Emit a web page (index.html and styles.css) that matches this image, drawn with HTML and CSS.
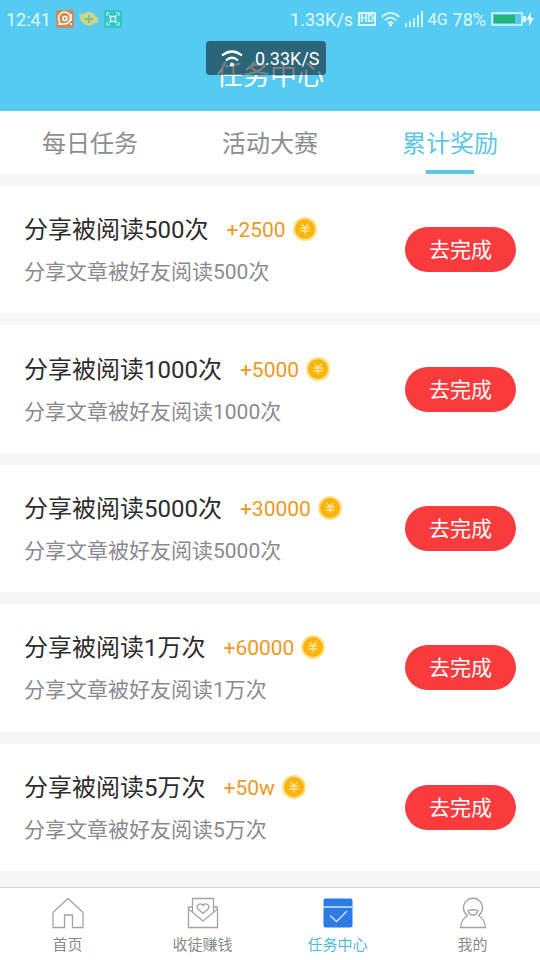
FILE: index.html
```html
<!DOCTYPE html>
<html lang="zh-CN">
<head>
<meta charset="utf-8">
<meta name="viewport" content="width=device-width, initial-scale=1">
<title>任务中心</title>
<link rel="stylesheet" href="styles.css">
</head>
<body>
<svg class="defs" aria-hidden="true">
  <symbol id="coin" viewBox="0 0 24 24">
    <circle cx="12" cy="12" r="12" fill="#fde08a"/>
    <circle cx="12" cy="12" r="10" fill="#fbb40c"/>
    <path d="M8.5 7 12 10.500l3.500-3.500M7.500 11h9M7.500 14h9M12 10.500v7" fill="none" stroke="#fde69a" stroke-width="1.300"/>
  </symbol>
  <symbol id="wifi" viewBox="0 0 22 18">
    <path d="M1 6.500Q11-2.500 21 6.500M4.500 10.500Q11 4.500 17.500 10.500M8 14Q11 11.500 14 14" fill="none" stroke="currentColor" stroke-width="2"/>
    <circle cx="11" cy="16" r="1.700" fill="currentColor"/>
  </symbol>
  <symbol id="wifi-low" viewBox="0 0 22 18">
    <path d="M1 6.500Q11-1.500 21 6.500M5 11.500Q11 6 17 11.500" fill="none" stroke="currentColor" stroke-width="2.200"/>
    <circle cx="11" cy="15.500" r="2" fill="currentColor"/>
  </symbol>
</svg>
<header class="header">
  <div class="status">
    <div class="status-left">
      <time>12:41</time>
      <svg width="18" height="18" viewBox="0 0 18 18"><rect width="18" height="18" rx="2" fill="#cc8d59"/><path d="M4 12a6 6 0 1 1 4 2H3l1-2M15 4v7M15 13v2" fill="none" stroke="#fff" stroke-width="1.500"/><circle cx="9" cy="8.500" r="2" fill="none" stroke="#fff" stroke-width="1.500"/></svg>
      <svg width="20" height="18" viewBox="0 0 20 18"><path d="M0 4 4 4Q10-1 16 5L19 8 19 13 16 13Q10 19 4 13L1 10Z" fill="#c8d58b"/><path d="M6 9h8M10 5v8" stroke="#75b486" stroke-width="1.500"/></svg>
      <svg width="18" height="18" viewBox="0 0 18 18"><rect width="18" height="18" rx="2" fill="#30c8c7"/><path d="M3 6V3h3M12 3h3v3M15 12v3h-3M6 15H3v-3M5 5l2 2M13 5l-2 2M5 13l2-2M13 13l-2-2" fill="none" stroke="#b6f3ee" stroke-width="1.200"/><rect x="6.500" y="6.500" width="5" height="5" fill="none" stroke="#e2fffb" stroke-width="1.300"/></svg>
    </div>
    <div class="status-right">
      <span>1.33K/s</span>
      <span class="hd">HD</span>
      <svg width="19" height="16"><use href="#wifi"/></svg>
      <svg width="18" height="16" viewBox="0 0 18 16"><path d="M1 12v4M5 10v6M9 7v9M13 4v12M17 0v16" stroke="currentColor" stroke-width="1.700"/></svg>
      <span class="network">4G</span>
      <span>78%</span>
      <svg class="battery" width="43" height="16" viewBox="0 0 43 16"><rect x="1" y="2" width="30" height="12" fill="none" stroke="currentColor" stroke-width="1.500"/><rect x="3" y="4" width="21" height="8" fill="#22b573"/><path d="M32 5h3v6h-3z" fill="currentColor"/><path d="M40 1 35 9h3v6l5-8h-3z" fill="currentColor"/></svg>
    </div>
  </div>
  <h1 class="title">任务中心</h1>
  <div class="speed"><svg width="22" height="18"><use href="#wifi-low"/></svg><span>0.33K/S</span></div>
</header>
<nav class="tabs">
  <a class="tab" href="#daily">每日任务</a>
  <a class="tab" href="#contest">活动大赛</a>
  <a class="tab active" href="#rewards" aria-current="page">累计奖励</a>
</nav>
<main class="list">
  <section class="task">
    <div class="info">
      <h2 class="name">分享被阅读500次 <span class="reward">+2500<svg class="coin"><use href="#coin"/></svg></span></h2>
      <p class="desc">分享文章被好友阅读500次</p>
    </div>
    <button class="go" type="button">去完成</button>
  </section>
  <section class="task">
    <div class="info">
      <h2 class="name">分享被阅读1000次 <span class="reward">+5000<svg class="coin"><use href="#coin"/></svg></span></h2>
      <p class="desc">分享文章被好友阅读1000次</p>
    </div>
    <button class="go" type="button">去完成</button>
  </section>
  <section class="task">
    <div class="info">
      <h2 class="name">分享被阅读5000次 <span class="reward">+30000<svg class="coin"><use href="#coin"/></svg></span></h2>
      <p class="desc">分享文章被好友阅读5000次</p>
    </div>
    <button class="go" type="button">去完成</button>
  </section>
  <section class="task">
    <div class="info">
      <h2 class="name">分享被阅读1万次 <span class="reward">+60000<svg class="coin"><use href="#coin"/></svg></span></h2>
      <p class="desc">分享文章被好友阅读1万次</p>
    </div>
    <button class="go" type="button">去完成</button>
  </section>
  <section class="task">
    <div class="info">
      <h2 class="name">分享被阅读5万次 <span class="reward">+50w<svg class="coin"><use href="#coin"/></svg></span></h2>
      <p class="desc">分享文章被好友阅读5万次</p>
    </div>
    <button class="go" type="button">去完成</button>
  </section>
</main>
<nav class="bottom">
  <a class="item" href="#home">
    <svg class="icon" viewBox="0 0 32 32"><path d="M1 15.500 16 1.500l15 14V30.500H20.500V18h-8v12.500H1Z"/></svg>
    <span>首页</span>
  </a>
  <a class="item" href="#invite">
    <svg class="icon" viewBox="0 0 32 32"><path d="M5.500 15V1.500h21V15M5.500 10H1.500v20.500h29V10h-4M1.500 12 16 24 30.500 12"/><path d="M16 16.500 11 12C8.500 8.500 13 4.500 16 8.500 19 4.500 23.500 8.500 21 12Z"/></svg>
    <span>收徒赚钱</span>
  </a>
  <a class="item active" href="#tasks" aria-current="page">
    <svg class="icon" viewBox="0 0 32 32"><rect class="solid" x="1.500" y="1.500" width="29" height="29" rx="2"/><path class="mark" d="M1.500 10h29M8 18.500l6.500 6L25 14"/></svg>
    <span>任务中心</span>
  </a>
  <a class="item" href="#me">
    <svg class="icon" viewBox="0 0 32 32"><path d="M10.500 18.500a9.500 9.500 0 1 1 11 0Q27.500 22 28.500 30.500h-25Q4.500 22 10.500 18.500Z"/><path d="M11 13.500q5-1.500 10 0-1 4.500-5 4.500t-5-4.500Z"/></svg>
    <span>我的</span>
  </a>
</nav>
</body>
</html>
```
FILE: styles.css
```css
* {
  box-sizing: border-box;
}

body {
  margin: 0;
  min-height: 100vh;
  display: flex;
  flex-direction: column;
  background: #f6f6f6;
  font-family: Roboto, "Noto Sans CJK SC", sans-serif;
}

a {
  color: inherit;
  text-decoration: none;
}

h1, h2, p {
  margin: 0;
  font-weight: 400;
}

svg {
  flex: none;
}

.defs {
  position: absolute;
  width: 0;
  height: 0;
}

.header {
  position: relative;
  height: 111px;
  background: #55cbf3;
  color: #fff;
}

.status {
  display: flex;
  justify-content: space-between;
  align-items: center;
  height: 38px;
  padding: 0 6px;
  font-size: 18px;
  color: #e0f8ff;
}

.status-left {
  display: flex;
  align-items: center;
  gap: 5px;
}

.status-right {
  display: flex;
  align-items: center;
  gap: 5px;
}

.hd {
  border: 2px solid;
  font-size: 10px;
  font-weight: 700;
  line-height: 10px;
}

.network {
  font-size: 16px;
}

.title {
  line-height: 76px;
  font-size: 27px;
  text-align: center;
}

.speed {
  position: absolute;
  top: 41px;
  left: 50%;
  transform: translateX(-64px);
  display: flex;
  align-items: center;
  gap: 12px;
  height: 34px;
  padding: 0 6px 0 15px;
  border-radius: 4px;
  background: rgba(0, 0, 0, 0.5);
  font-size: 18px;
}

.tabs {
  display: grid;
  grid-template-columns: repeat(3, 1fr);
  height: 63px;
  background: #fff;
  color: #8e8e8e;
  font-size: 24px;
  line-height: 66px;
  text-align: center;
}

.tab {
  height: 63px;
}

.tab.active {
  position: relative;
  color: #5cc6e8;
}

.tab.active::after {
  content: "";
  position: absolute;
  bottom: 0;
  left: 50%;
  width: 48px;
  height: 4px;
  margin-left: -24px;
  background: #5cc8e8;
}

.list {
  flex: 1;
  display: grid;
  grid-auto-rows: 1fr;
  gap: 12px;
  padding: 12px 0 16px;
}

.task {
  display: flex;
  justify-content: space-between;
  align-items: center;
  padding: 24px;
  background: #fff;
}

.info {
  display: flex;
  flex-direction: column;
  gap: 8px;
  padding-top: 1px;
}

.name {
  display: flex;
  align-items: center;
  gap: 18px;
  font-size: 24px;
  line-height: 36px;
  color: #2c2c2c;
}

.reward {
  display: flex;
  align-items: center;
  gap: 7px;
  font-size: 21px;
  color: #ed981f;
}

.coin {
  width: 24px;
  height: 24px;
  margin-bottom: 2px;
}

.desc {
  font-size: 21px;
  line-height: 32px;
  color: #8a8a8f;
}

.go {
  height: 45px;
  padding: 0 24px 3px;
  border: 0;
  border-radius: 24px;
  background: #f93b3e;
  color: #fff;
  font: inherit;
  font-size: 21px;
}

.bottom {
  display: grid;
  grid-template-columns: repeat(4, 1fr);
  height: 73px;
  border-top: 1px solid #d9d9d9;
  background: #fff;
  color: #8a8a8a;
  font-size: 15px;
  line-height: 20px;
}

.item {
  display: flex;
  flex-direction: column;
  align-items: center;
  gap: 6px;
  padding-top: 9px;
}

.item.active {
  color: #4fb9dd;
}

.icon {
  width: 32px;
  height: 32px;
  fill: none;
  stroke: #a4a4a4;
  stroke-width: 1.3;
}

.icon .solid {
  fill: #2c7be5;
  stroke: none;
}

.icon .mark {
  stroke: #d5e9ff;
}
```
